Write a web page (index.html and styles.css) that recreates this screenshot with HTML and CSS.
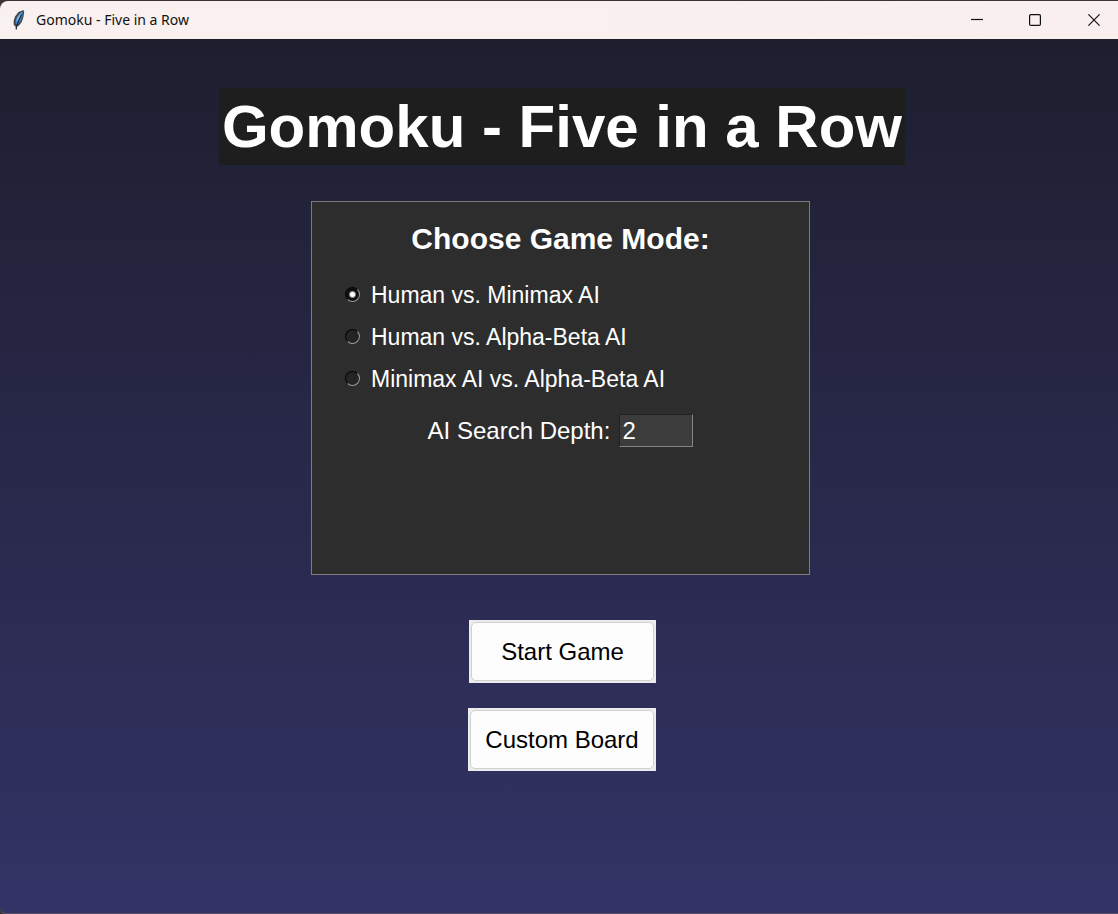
FILE: index.html
```
<!DOCTYPE html>
<html lang="en">
<head>
<meta charset="utf-8">
<title>Gomoku - Five in a Row</title>
<link rel="stylesheet" href="styles.css">
</head>
<body>
<div class="window">
  <header class="titlebar">
    <svg class="feather" viewBox="0 0 16 22" aria-hidden="true">
      <path d="M5.200 20.500 4.500 17.500 2.800 16 2.600 12 4 7.500 7.500 3 12.500 1 13.200 3.500 12.200 9 10.500 13.500 7.500 17 6 17.500Z" fill="#45474c"/>
      <path d="M4.800 15.500 4.600 11.500 6.500 7 10 3.200 12 2.400 11.200 8.500 9.200 12.800 6.500 15.500Z" fill="#3f86cf"/>
      <path d="M5.200 12.500 6.600 8 10.500 3.500 9.500 6.500 7 11.500Z" fill="#84b6e6"/>
      <path d="M5.200 20.500 5.600 17 7.400 12.500 10.600 5.500" fill="none" stroke="#1b2433" stroke-width="1.100"/>
    </svg>
    <span class="caption">Gomoku - Five in a Row</span>
    <div class="controls">
      <button class="control" type="button" aria-label="Minimize">
        <svg viewBox="0 0 12 12" aria-hidden="true"><path d="M0 5.500H12"/></svg>
      </button>
      <button class="control" type="button" aria-label="Maximize">
        <svg viewBox="0 0 12 12" aria-hidden="true"><rect x=".6" y=".6" width="10.800" height="10.800" rx="1.200"/></svg>
      </button>
      <button class="control" type="button" aria-label="Close">
        <svg viewBox="0 0 12 12" aria-hidden="true"><path d="M.4.4 11.600 11.600M11.600.4.4 11.600"/></svg>
      </button>
    </div>
  </header>
  <main class="content">
    <h1 class="title">Gomoku - Five in a Row</h1>
    <form class="panel">
      <h2 class="heading" id="mode">Choose Game Mode:</h2>
      <div class="modes" role="radiogroup" aria-labelledby="mode">
        <label class="mode"><input class="radio" type="radio" name="mode" checked>Human vs. Minimax AI</label>
        <label class="mode"><input class="radio" type="radio" name="mode">Human vs. Alpha-Beta AI</label>
        <label class="mode"><input class="radio" type="radio" name="mode">Minimax AI vs. Alpha-Beta AI</label>
      </div>
      <div class="depth">
        <label for="depth">AI Search Depth:</label>
        <input class="entry" id="depth" type="text" value="2">
      </div>
    </form>
    <div class="actions">
      <button class="action start" type="button"><span class="face">Start Game</span></button>
      <button class="action" type="button"><span class="face">Custom Board</span></button>
    </div>
  </main>
</div>
</body>
</html>
```
FILE: styles.css
```
* {
  box-sizing: border-box;
}

body {
  margin: 0;
  background: #3b3537;
  font-family: "Liberation Sans", Arial, sans-serif;
}

.window {
  display: flex;
  flex-direction: column;
  min-height: 100vh;
  padding-top: 1px;
}

.titlebar {
  display: flex;
  align-items: center;
  height: 38px;
  padding-left: 11px;
  border-radius: 8px 0 0 0;
  background: linear-gradient(90deg, #f9f1ef, #f9efef);
  color: #111;
}

.feather {
  width: 16px;
  height: 22px;
}

.caption {
  flex: 1;
  padding-left: 9px;
  font: 14px/20px "Noto Sans", "Open Sans", sans-serif;
}

.controls {
  display: flex;
  align-self: stretch;
}

.control {
  display: flex;
  align-items: center;
  justify-content: center;
  width: 58px;
  padding: 0;
  border: 0;
  background: none;
}

.control:last-child {
  width: 54px;
  padding-left: 6px;
}

.control svg {
  width: 12px;
  height: 12px;
  fill: none;
  stroke: #111;
  stroke-width: 1.2;
}

.content {
  display: flex;
  flex: 1;
  flex-direction: column;
  align-items: center;
  padding: 49px 0 32px 6px;
  border-bottom: 1px solid #55536f;
  border-radius: 0 0 0 6px;
  background: linear-gradient(#1e1e2f, #333366);
}

.title {
  margin: 0;
  padding: 4px 3px;
  background: #1e1e1e;
  color: #fff;
  font-size: 60px;
  line-height: 69px;
}

.panel {
  width: 499px;
  max-width: 100%;
  min-height: 374px;
  margin-top: 36px;
  margin-right: 3px;
  padding: 19px 32px;
  border: 1px solid #7d7d7d;
  background: #2d2d2d;
  color: #fff;
  font-size: 24px;
}

.heading {
  margin: 0;
  font-size: 30px;
  line-height: 36px;
  text-align: center;
}

.modes {
  display: grid;
  gap: 14px;
  margin-top: 24px;
}

.mode {
  display: flex;
  align-items: center;
  font-size: 23px;
  line-height: 28px;
}

.radio {
  appearance: none;
  width: 15px;
  height: 15px;
  margin: 0 11px 1px 1px;
  border: 1px solid;
  border-color: #050505 #9a9a9a #9a9a9a #050505;
  border-radius: 50%;
  background: #242424;
}

.radio:checked {
  background: radial-gradient(circle, #fff 2px, #111 4px);
}

.depth {
  display: flex;
  align-items: center;
  justify-content: center;
  gap: 9px;
  margin-top: 21px;
}

.entry {
  width: 74px;
  height: 33px;
  padding: 0 2px;
  border: 1px solid;
  border-color: #222 #858585 #858585 #222;
  border-radius: 0;
  background: #3c3c3c;
  color: #fff;
  font: inherit;
}

.actions {
  display: grid;
  gap: 25px;
  justify-items: end;
  margin-top: 45px;
}

.action {
  width: 188px;
  height: 63px;
  padding: 2px;
  border: 0;
  background: #ececee;
  color: #000;
  font: 24px/28px "Liberation Sans", Arial, sans-serif;
}

.start {
  width: 187px;
}

.face {
  display: flex;
  align-items: center;
  justify-content: center;
  height: 100%;
  border: 1px solid #d0d0d0;
  border-radius: 5px;
  background: #fdfdfd;
}
```
